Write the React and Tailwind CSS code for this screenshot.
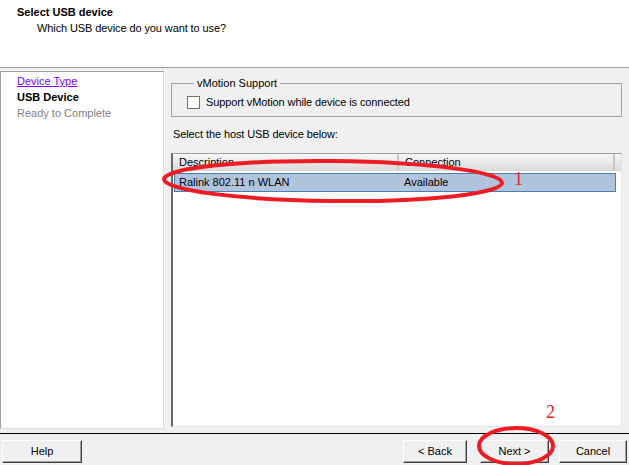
import React from "react";

function Btn({ children, className = "" }) {
  return (
    <button
      className={
        "h-[23px] bg-[#f0f0f0] border border-t-white border-l-white border-r-[#404040] border-b-[#404040] shadow-[inset_-1px_-1px_0_#a0a0a0] text-[11px] leading-[13px] text-black " +
        className
      }
    >
      {children}
    </button>
  );
}

export default function App() {
  return (
    <div
      className="relative w-[629px] h-[465px] overflow-hidden bg-[#f0f0f0] text-[11px] leading-[13px] text-black"
      style={{ fontFamily: '"Liberation Sans", Arial, sans-serif' }}
    >
      {/* Header */}
      <div className="h-[68px] bg-white border-b border-[#a0a0a0] pl-[17px] pt-[6px]">
        <div className="font-bold">Select USB device</div>
        <div className="pl-[20px] pt-[3px] tracking-[-0.1px]">Which USB device do you want to use?</div>
      </div>

      {/* Body */}
      <div className="flex h-[365px]">
        {/* Left nav */}
        <div className="mt-[3px] w-[165px] h-[358px] bg-white border border-t-[#a0a0a0] border-l-[#a0a0a0] border-r-[#dcdcdc] border-b-[#dcdcdc] pl-[16px] pt-[3px] flex flex-col gap-[3px]">
          <span className="text-[#7f00ff] underline">Device Type</span>
          <span className="font-bold">USB Device</span>
          <span className="text-[#808080]">Ready to Complete</span>
        </div>

        {/* Right content */}
        <div className="flex-1 pl-[7px] pr-[7px] flex flex-col">
          <fieldset className="mt-[9px] w-[451px] border border-[#a0a0a0] pl-[15px] pt-[6px] pb-[7px]">
            <legend className="ml-[7px] px-[3px] leading-[13px]">vMotion Support</legend>
            <label className="flex items-center gap-[6px]">
              <span className="w-[13px] h-[13px] bg-white border border-[#707070]"></span>
              <span className="tracking-[-0.1px]">Support vMotion while device is connected</span>
            </label>
          </fieldset>

          <div className="mt-[11px] pl-[2px] tracking-[-0.1px]">Select the host USB device below:</div>

          <div className="mt-[12px] w-[451px] h-[274px] bg-white border-t border-l-2 border-r border-b border-t-[#a0a0a0] border-l-[#696969] border-r-[#e3e3e3] border-b-[#e3e3e3] flex flex-col">
            <div className="flex h-[17px] bg-gradient-to-b from-[#f7f7f7] to-[#dcdcdc] border-b border-[#d5d5d5]">
              <div className="w-[226px] border-r-2 border-[#c8c8c8] pl-[6px] flex items-center">Description</div>
              <div className="w-[216px] border-r-2 border-[#c8c8c8] pl-[6px] flex items-center">Connection</div>
              <div className="flex-1"></div>
            </div>
            <div className="mt-[2px] ml-[1px] w-[442px] h-[19px] bg-[#b0c4de] border border-[#4a7eb1] flex items-center">
              <span className="w-[226px] pl-[4px]">Ralink 802.11 n WLAN</span>
              <span className="pl-[3px]">Available</span>
            </div>
          </div>
        </div>
      </div>

      {/* Footer */}
      <div className="h-[32px] border-t border-black flex items-start pt-[6px] pl-[2px] pr-[2px]">
        <Btn className="w-[80px]">Help</Btn>
        <div className="flex-1"></div>
        <Btn className="w-[64px]">&lt; Back</Btn>
        <Btn className="w-[69px] ml-[13px]">Next &gt;</Btn>
        <Btn className="w-[68px] ml-[10px]">Cancel</Btn>
      </div>

      {/* Red annotations */}
      <svg className="absolute left-0 top-0 pointer-events-none" width="629" height="465">
        <ellipse cx="333" cy="181" rx="169" ry="20" fill="none" stroke="#ed1c24" strokeWidth="4" transform="rotate(0.6 333 181)" />
        <ellipse cx="516" cy="446" rx="37" ry="18" fill="none" stroke="#ed1c24" strokeWidth="4" />
      </svg>
      <span
        className="absolute left-[514px] top-[170px] text-[18px] leading-[18px] text-[#ed1c24]"
        style={{ fontFamily: '"Liberation Serif", "Times New Roman", serif' }}
      >
        1
      </span>
      <span
        className="absolute left-[546px] top-[403px] text-[18px] leading-[18px] text-[#ed1c24]"
        style={{ fontFamily: '"Liberation Serif", "Times New Roman", serif' }}
      >
        2
      </span>
    </div>
  );
}
